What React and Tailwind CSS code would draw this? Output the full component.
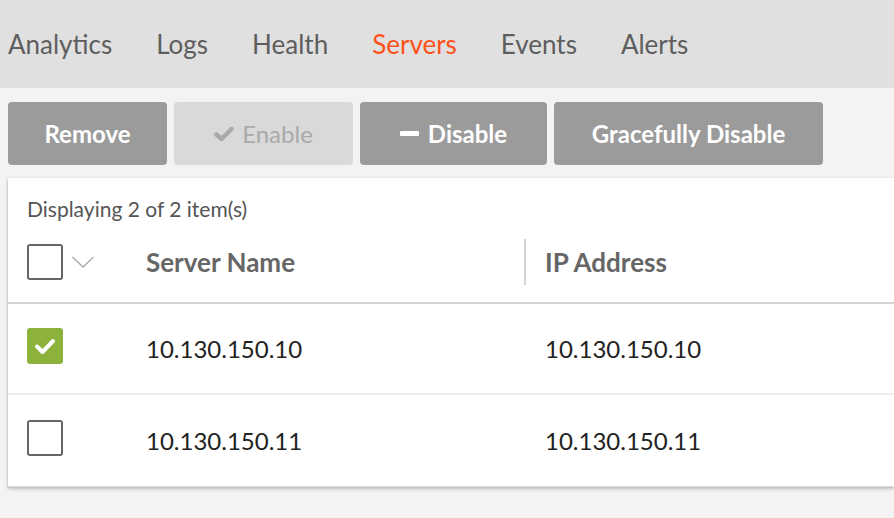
import React from "react";

const tabs = ["Analytics", "Logs", "Health", "Servers", "Events", "Alerts"];

const servers = [
  { name: "10.130.150.10", ip: "10.130.150.10", checked: true },
  { name: "10.130.150.11", ip: "10.130.150.11", checked: false },
];

function Checkbox({ checked }) {
  if (checked) {
    return (
      <div className="w-[36px] h-[36px] rounded-[3px] bg-[#8db23c] flex items-center justify-center">
        <svg width="22" height="18" viewBox="0 0 22 18">
          <path d="M3 9.5 L8.5 15 L19 4" fill="none" stroke="white" strokeWidth="4" strokeLinecap="round" strokeLinejoin="round" />
        </svg>
      </div>
    );
  }
  return <div className="w-[36px] h-[36px] rounded-[3px] border-2 border-[#666]" />;
}

export default function App() {
  return (
    <div className="min-h-screen bg-[#f3f3f3] font-['Lato',sans-serif]">
      <nav className="h-[88px] bg-[#e0e0e0] flex items-center gap-[44px] px-2 text-[26px] text-[#5e5e5e]">
        {tabs.map((t) => (
          <span key={t} className={t === "Servers" ? "text-[#ff5219]" : ""}>
            {t}
          </span>
        ))}
      </nav>

      <div className="flex gap-[7px] px-2 pt-[14px]">
        <button className="w-[159px] h-[63px] rounded-[4px] bg-[#9b9b9b] text-white text-[24px] font-bold">
          Remove
        </button>
        <button className="w-[179px] h-[63px] rounded-[4px] bg-[#d9d9d9] text-[#a9a9a9] text-[24px] flex items-center justify-center gap-[8px]">
          <svg width="20" height="16" viewBox="0 0 20 16">
            <path d="M2.5 8.5 L7.5 13 L17.5 3" fill="none" stroke="#a9a9a9" strokeWidth="4.5" strokeLinecap="round" strokeLinejoin="round" />
          </svg>
          Enable
        </button>
        <button className="w-[187px] h-[63px] rounded-[4px] bg-[#9b9b9b] text-white text-[24px] font-bold flex items-center justify-center gap-[9px]">
          <span className="w-[19px] h-[5px] rounded-[1px] bg-white" />
          Disable
        </button>
        <button className="w-[269px] h-[63px] rounded-[4px] bg-[#9b9b9b] text-white text-[24px] font-bold">
          Gracefully Disable
        </button>
      </div>

      <div className="ml-2 mt-[13px] bg-white border-b border-[#dcdcdc] shadow-[0_2px_3px_rgba(0,0,0,0.22),-1px_0_2px_rgba(0,0,0,0.08)]">
        <div className="pl-[19px] pt-[18px] text-[21px] leading-[26px] text-[#555]">
          Displaying 2 of 2 item(s)
        </div>

        <div className="grid grid-cols-[138px_378px_1fr] items-center h-[82px] border-b-2 border-[#d4d4d4]">
          <div className="pl-[19px] flex items-center gap-[8px]">
            <Checkbox checked={false} />
            <svg width="24" height="14" viewBox="0 0 24 14">
              <path d="M1.5 2 L12 12 L22.5 2" fill="none" stroke="#aaa" strokeWidth="1.3" />
            </svg>
          </div>
          <div className="text-[26px] font-bold text-[#666]">Server Name</div>
          <div className="h-[46px] border-l-2 border-[#d6d6d6] pl-[19px] flex items-center text-[26px] font-bold text-[#666]">
            IP Address
          </div>
        </div>

        {servers.map((s, i) => (
          <div
            key={s.name}
            className={
              "grid grid-cols-[138px_378px_1fr] items-center h-[91px] text-[24px] text-[#222] " +
              (i === 0 ? "border-b-2 border-[#eeeeee]" : "")
            }
          >
            <div className="pl-[19px] pb-[5px]">
              <Checkbox checked={s.checked} />
            </div>
            <div>{s.name}</div>
            <div className="pl-[21px]">{s.ip}</div>
          </div>
        ))}
      </div>
    </div>
  );
}
